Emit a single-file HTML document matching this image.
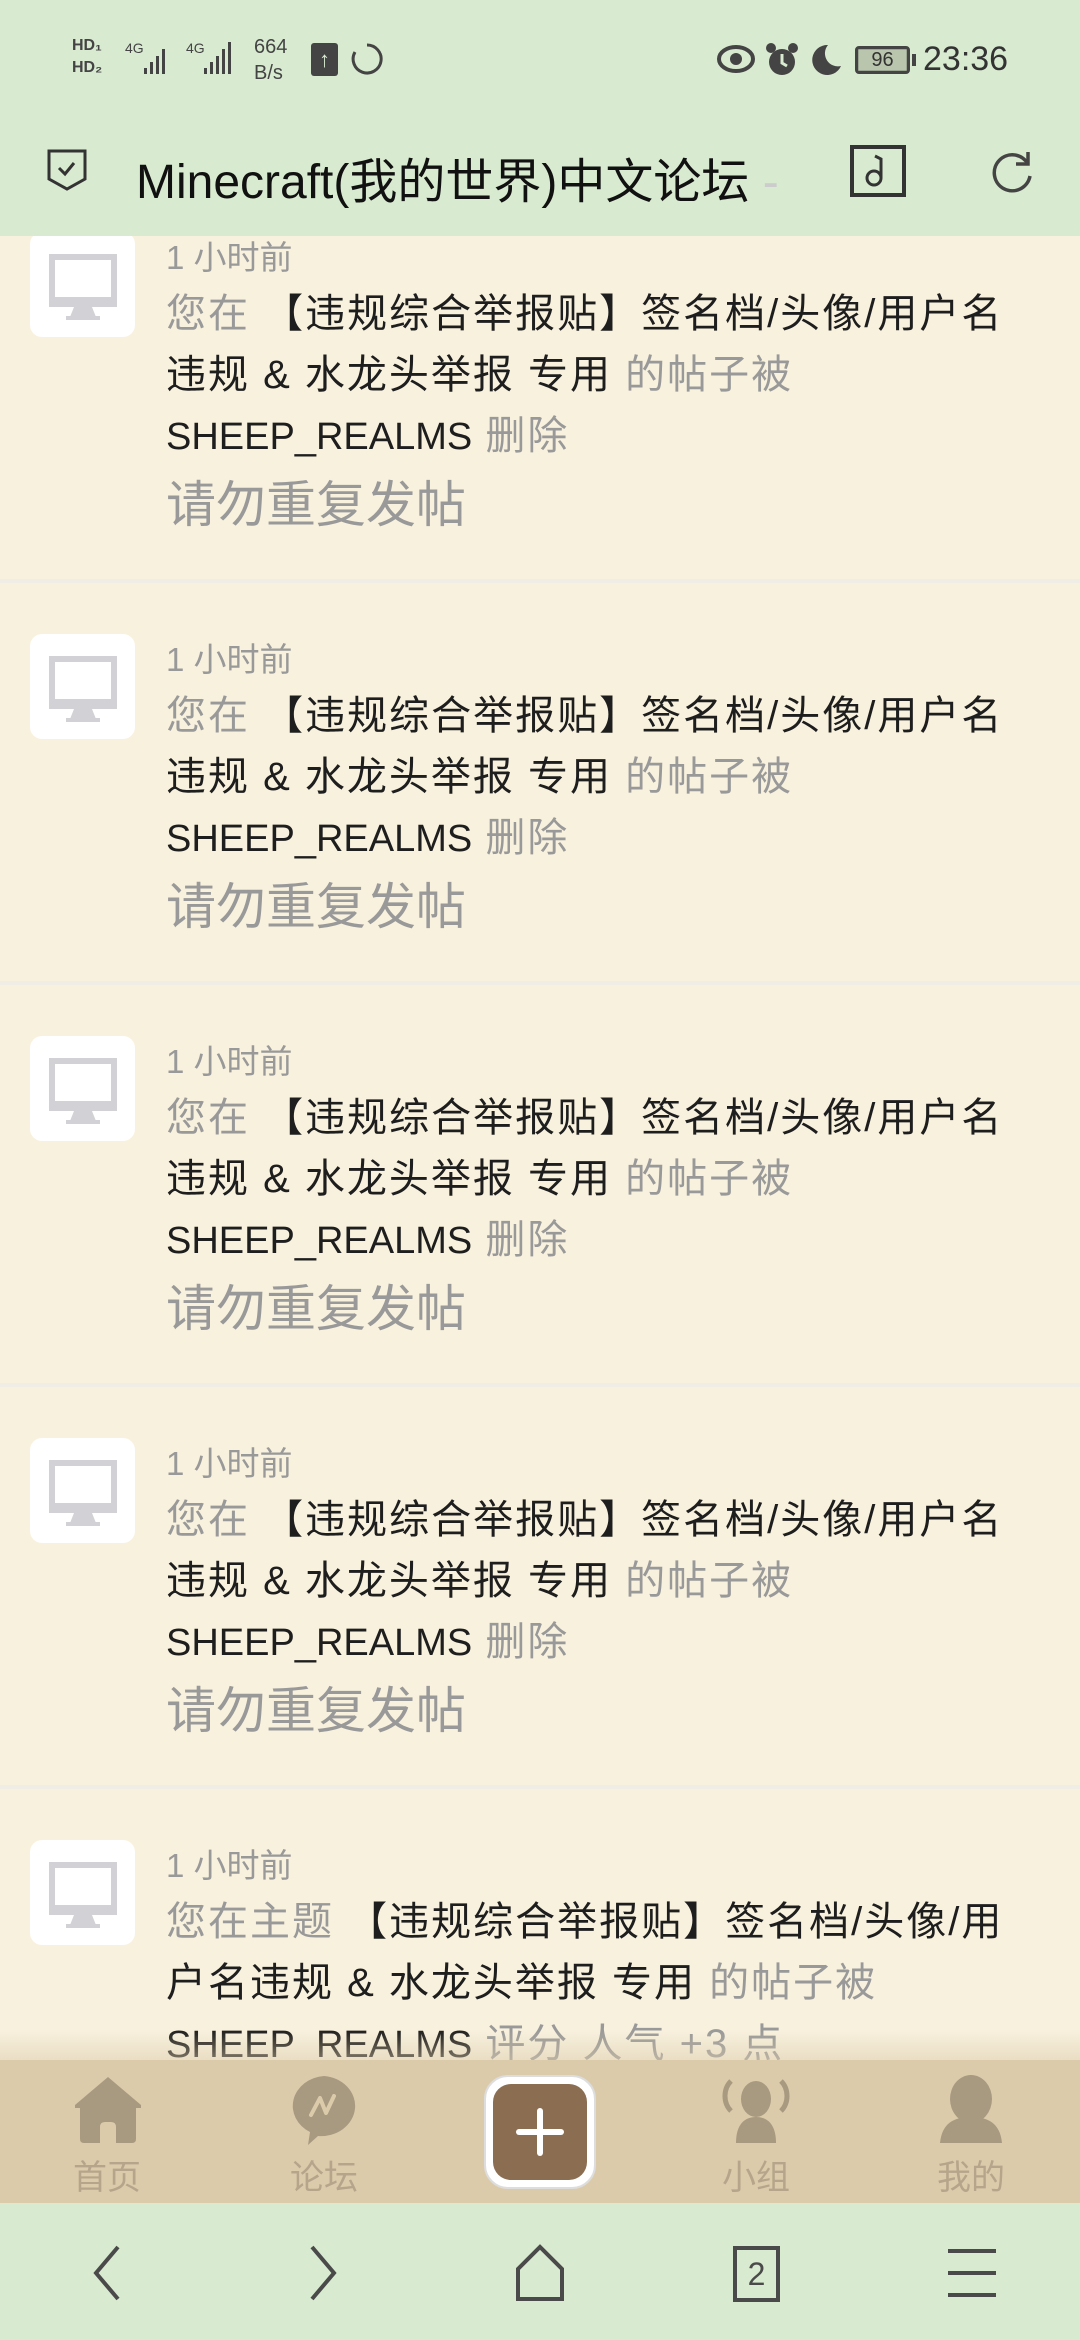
<!DOCTYPE html>
<html><head><meta charset="utf-8"><style>
*{margin:0;padding:0;box-sizing:border-box}
body{width:1080px;height:2340px;overflow:hidden;background:#f8f1de;font-family:"Liberation Sans","Noto Sans CJK SC",sans-serif;position:relative}
.top{position:absolute;left:0;top:0;width:1080px;height:236px;background:#d8ead0;z-index:5}
.item{position:absolute;left:0;width:1080px;height:402px;border-top:4px solid #efede6}
.av{position:absolute;left:30px;top:51px;width:105px;height:105px;background:#fff;border-radius:12px}
.t{position:absolute;left:166px;color:#999;font-size:33px;white-space:nowrap}
.l{position:absolute;left:166px;font-size:40px;color:#1e1e1e;white-space:nowrap;letter-spacing:2px}
.s{letter-spacing:0;font-size:38px}
.g{color:#999}
.big{position:absolute;left:166px;font-size:50px;color:#999;white-space:nowrap}
.nav{position:absolute;left:0;top:2060px;width:1080px;height:143px;background:#dccbaa;z-index:6}
.shade{position:absolute;left:0;top:2030px;width:1080px;height:30px;background:linear-gradient(rgba(220,203,170,0),rgba(220,203,170,0.5));z-index:6}
.lab{position:absolute;top:2150px;font-size:34px;color:#b6a58a;width:120px;text-align:center;z-index:7}
.bb{position:absolute;left:0;top:2203px;width:1080px;height:137px;background:#d8ead0;z-index:6}
</style></head><body>
<div class="top">
  <div style="position:absolute;left:72px;top:35px;font-size:16px;font-weight:bold;color:#444;line-height:22px">HD₁<br>HD₂</div>
  <div style="position:absolute;left:125px;top:40px;font-size:14px;color:#444">4G</div>
  <svg style="position:absolute;left:140px;top:40px" width="40" height="36"><g fill="#444"><rect x="4" y="28" width="3" height="6"/><rect x="10" y="22" width="3" height="12"/><rect x="16" y="16" width="3" height="18"/><rect x="22" y="9" width="3" height="25"/></g></svg>
  <div style="position:absolute;left:186px;top:40px;font-size:14px;color:#444">4G</div>
  <svg style="position:absolute;left:200px;top:40px" width="40" height="36"><g fill="#444"><rect x="4" y="28" width="3" height="6"/><rect x="10" y="22" width="3" height="12"/><rect x="16" y="16" width="3" height="18"/><rect x="22" y="9" width="3" height="25"/><rect x="28" y="2" width="3" height="32"/></g></svg>
  <div style="position:absolute;left:254px;top:34px;font-size:20px;color:#444;line-height:26px">664<br>B/s</div>
  <div style="position:absolute;left:311px;top:43px;width:27px;height:33px;background:#444;border-radius:3px;color:#d8ead0;font-size:22px;text-align:center;line-height:33px;font-weight:bold">↑</div>
  <svg style="position:absolute;left:350px;top:42px" width="34" height="34"><path d="M17 3 A14 14 0 1 1 5 10" fill="none" stroke="#444" stroke-width="3"/></svg>
  <svg style="position:absolute;left:716px;top:44px" width="40" height="30"><ellipse cx="20" cy="15" rx="17" ry="12" fill="none" stroke="#444" stroke-width="4"/><circle cx="20" cy="15" r="6" fill="#444"/></svg>
  <svg style="position:absolute;left:764px;top:42px" width="36" height="36"><circle cx="18" cy="20" r="13" fill="#444"/><circle cx="7" cy="6" r="5" fill="#444"/><circle cx="29" cy="6" r="5" fill="#444"/><path d="M18 12v9l5 3" stroke="#d8ead0" stroke-width="3" fill="none"/></svg>
  <svg style="position:absolute;left:808px;top:42px" width="36" height="36"><path d="M20 3 A15 15 0 1 0 33 24 A13 13 0 0 1 20 3Z" fill="#444"/></svg>
  <div style="position:absolute;left:855px;top:46px;width:55px;height:28px;border:3px solid #444;border-radius:4px;background:#9aa592"><div style="margin:1px;height:20px;background:#b9c5ad;font-size:20px;line-height:20px;text-align:center;color:#333">96</div></div>
  <div style="position:absolute;left:912px;top:54px;width:4px;height:12px;background:#444"></div>
  <div style="position:absolute;left:923px;top:40px;font-size:34px;color:#333">23:36</div>
  <svg style="position:absolute;left:46px;top:148px" width="42" height="44"><path d="M3 3h36v28l-18 10-18-10Z" fill="none" stroke="#333" stroke-width="3"/><path d="M13 20l6 6 9-11" fill="none" stroke="#333" stroke-width="3"/></svg>
  <div style="position:absolute;left:136px;top:142px;font-size:48px;color:#111;white-space:nowrap">Minecraft(我的世界)中文论坛 <span style="color:#ccc">-</span></div>
  <div style="position:absolute;left:800px;top:140px;width:44px;height:70px;background:#d8ead0"></div>
  <svg style="position:absolute;left:850px;top:145px" width="56" height="52"><rect x="2" y="2" width="52" height="48" fill="none" stroke="#333" stroke-width="4"/><circle cx="24" cy="33" r="7" fill="none" stroke="#333" stroke-width="3"/><path d="M31 33V14l-6-3" fill="none" stroke="#333" stroke-width="3"/></svg>
  <svg style="position:absolute;left:988px;top:146px" width="48" height="48"><path d="M40 18 A18 18 0 1 0 42 30" fill="none" stroke="#444" stroke-width="3.5"/><path d="M40 6v12H28" fill="none" stroke="#444" stroke-width="3.5"/></svg>
</div>

<div class="item" style="top:177px">
  <div class="av"><svg width="105" height="105"><rect x="22" y="25" width="62" height="44" fill="#fff" stroke="#d2d2d6" stroke-width="6"/><rect x="19" y="65" width="68" height="10" fill="#d2d2d6"/><path d="M44 75h18l4 10H40Z" fill="#d2d2d6"/><rect x="36" y="84" width="34" height="4" fill="#d2d2d6"/></svg></div>
  <div class="t" style="top:50px">1 小时前</div>
  <div class="l" style="top:100px"><span class="g">您在</span> 【违规综合举报贴】签名档/头像/用户名</div>
  <div class="l" style="top:161px">违规 &amp; 水龙头举报 专用 <span class="g">的帖子被</span></div>
  <div class="l" style="top:222px"><span class="s">SHEEP_REALMS</span> <span class="g">删除</span></div>
  <div class="big" style="top:284px">请勿重复发帖</div>
</div>
<div class="item" style="top:579px">
  <div class="av"><svg width="105" height="105"><rect x="22" y="25" width="62" height="44" fill="#fff" stroke="#d2d2d6" stroke-width="6"/><rect x="19" y="65" width="68" height="10" fill="#d2d2d6"/><path d="M44 75h18l4 10H40Z" fill="#d2d2d6"/><rect x="36" y="84" width="34" height="4" fill="#d2d2d6"/></svg></div>
  <div class="t" style="top:50px">1 小时前</div>
  <div class="l" style="top:100px"><span class="g">您在</span> 【违规综合举报贴】签名档/头像/用户名</div>
  <div class="l" style="top:161px">违规 &amp; 水龙头举报 专用 <span class="g">的帖子被</span></div>
  <div class="l" style="top:222px"><span class="s">SHEEP_REALMS</span> <span class="g">删除</span></div>
  <div class="big" style="top:284px">请勿重复发帖</div>
</div>
<div class="item" style="top:981px">
  <div class="av"><svg width="105" height="105"><rect x="22" y="25" width="62" height="44" fill="#fff" stroke="#d2d2d6" stroke-width="6"/><rect x="19" y="65" width="68" height="10" fill="#d2d2d6"/><path d="M44 75h18l4 10H40Z" fill="#d2d2d6"/><rect x="36" y="84" width="34" height="4" fill="#d2d2d6"/></svg></div>
  <div class="t" style="top:50px">1 小时前</div>
  <div class="l" style="top:100px"><span class="g">您在</span> 【违规综合举报贴】签名档/头像/用户名</div>
  <div class="l" style="top:161px">违规 &amp; 水龙头举报 专用 <span class="g">的帖子被</span></div>
  <div class="l" style="top:222px"><span class="s">SHEEP_REALMS</span> <span class="g">删除</span></div>
  <div class="big" style="top:284px">请勿重复发帖</div>
</div>
<div class="item" style="top:1383px">
  <div class="av"><svg width="105" height="105"><rect x="22" y="25" width="62" height="44" fill="#fff" stroke="#d2d2d6" stroke-width="6"/><rect x="19" y="65" width="68" height="10" fill="#d2d2d6"/><path d="M44 75h18l4 10H40Z" fill="#d2d2d6"/><rect x="36" y="84" width="34" height="4" fill="#d2d2d6"/></svg></div>
  <div class="t" style="top:50px">1 小时前</div>
  <div class="l" style="top:100px"><span class="g">您在</span> 【违规综合举报贴】签名档/头像/用户名</div>
  <div class="l" style="top:161px">违规 &amp; 水龙头举报 专用 <span class="g">的帖子被</span></div>
  <div class="l" style="top:222px"><span class="s">SHEEP_REALMS</span> <span class="g">删除</span></div>
  <div class="big" style="top:284px">请勿重复发帖</div>
</div>
<div class="item" style="top:1785px">
  <div class="av"><svg width="105" height="105"><rect x="22" y="25" width="62" height="44" fill="#fff" stroke="#d2d2d6" stroke-width="6"/><rect x="19" y="65" width="68" height="10" fill="#d2d2d6"/><path d="M44 75h18l4 10H40Z" fill="#d2d2d6"/><rect x="36" y="84" width="34" height="4" fill="#d2d2d6"/></svg></div>
  <div class="t" style="top:50px">1 小时前</div>
  <div class="l" style="top:100px"><span class="g">您在主题</span> 【违规综合举报贴】签名档/头像/用</div>
  <div class="l" style="top:161px">户名违规 &amp; 水龙头举报 专用 <span class="g">的帖子被</span></div>
  <div class="l" style="top:222px"><span class="s">SHEEP_REALMS</span> <span class="g">评分 人气 +3 点</span></div>
</div>

<div class="shade"></div>
<div class="nav">
  <svg style="position:absolute;left:74px;top:17px" width="68" height="66"><path d="M34 0 L67 28 V31 H62 V62 Q62 66 58 66 H42 V50 Q42 45 37 45 H31 Q26 45 26 50 V66 H10 Q6 66 6 62 V31 H1 V28Z" fill="#a89a80"/></svg>
  <svg style="position:absolute;left:289px;top:15px" width="70" height="72"><path d="M35 1a34 30 0 1 1-6 60l-10 9 2-13A34 30 0 0 1 35 1Z" fill="#a89a80"/><path d="M22 40l9-17 6 15 8-17" fill="none" stroke="#dccbaa" stroke-width="4" stroke-linejoin="round" stroke-linecap="round"/></svg>
  <div style="position:absolute;left:484px;top:15px;width:112px;height:114px;border-radius:24px;background:#fff;border:2px solid #ddd">
    <div style="position:absolute;left:7px;top:7px;width:94px;height:96px;border-radius:18px;background:#8b6e52"></div>
    <div style="position:absolute;left:30px;top:52px;width:48px;height:6px;background:#fff;border-radius:3px"></div>
    <div style="position:absolute;left:51px;top:31px;width:6px;height:48px;background:#fff;border-radius:3px"></div>
  </div>
  <svg style="position:absolute;left:719px;top:17px" width="74" height="66"><ellipse cx="37" cy="22" rx="15" ry="18" fill="#a89a80"/><path d="M17 66c0-18 8-26 20-26s20 8 20 26Z" fill="#a89a80"/><path d="M12 4c-8 8-8 22 0 30M62 4c8 8 8 22 0 30" fill="none" stroke="#a89a80" stroke-width="5"/></svg>
  <svg style="position:absolute;left:938px;top:15px" width="66" height="68"><ellipse cx="33" cy="24" rx="21" ry="24" fill="#a89a80"/><path d="M2 68c2-20 14-26 31-26s29 6 31 26Z" fill="#a89a80"/></svg>
</div>
<div class="lab" style="left:47px">首页</div>
<div class="lab" style="left:264px">论坛</div>
<div class="lab" style="left:696px">小组</div>
<div class="lab" style="left:911px">我的</div>

<div class="bb">
  <svg style="position:absolute;left:88px;top:40px" width="40" height="60"><path d="M30 4 L8 30 L30 56" fill="none" stroke="#4a4a4a" stroke-width="4"/></svg>
  <svg style="position:absolute;left:302px;top:40px" width="40" height="60"><path d="M10 4 L32 30 L10 56" fill="none" stroke="#4a4a4a" stroke-width="4"/></svg>
  <svg style="position:absolute;left:514px;top:40px" width="52" height="60"><path d="M4 56 V26 L26 4 L48 26 V56Z" fill="none" stroke="#4a4a4a" stroke-width="4"/></svg>
  <div style="position:absolute;left:733px;top:43px;width:47px;height:56px;border:4px solid #4a4a4a;font-size:32px;color:#4a4a4a;text-align:center;line-height:48px">2</div>
  <svg style="position:absolute;left:946px;top:44px" width="52" height="52"><path d="M2 4H50M2 26H50M2 48H50" stroke="#4a4a4a" stroke-width="4"/></svg>
</div>
</body></html>
